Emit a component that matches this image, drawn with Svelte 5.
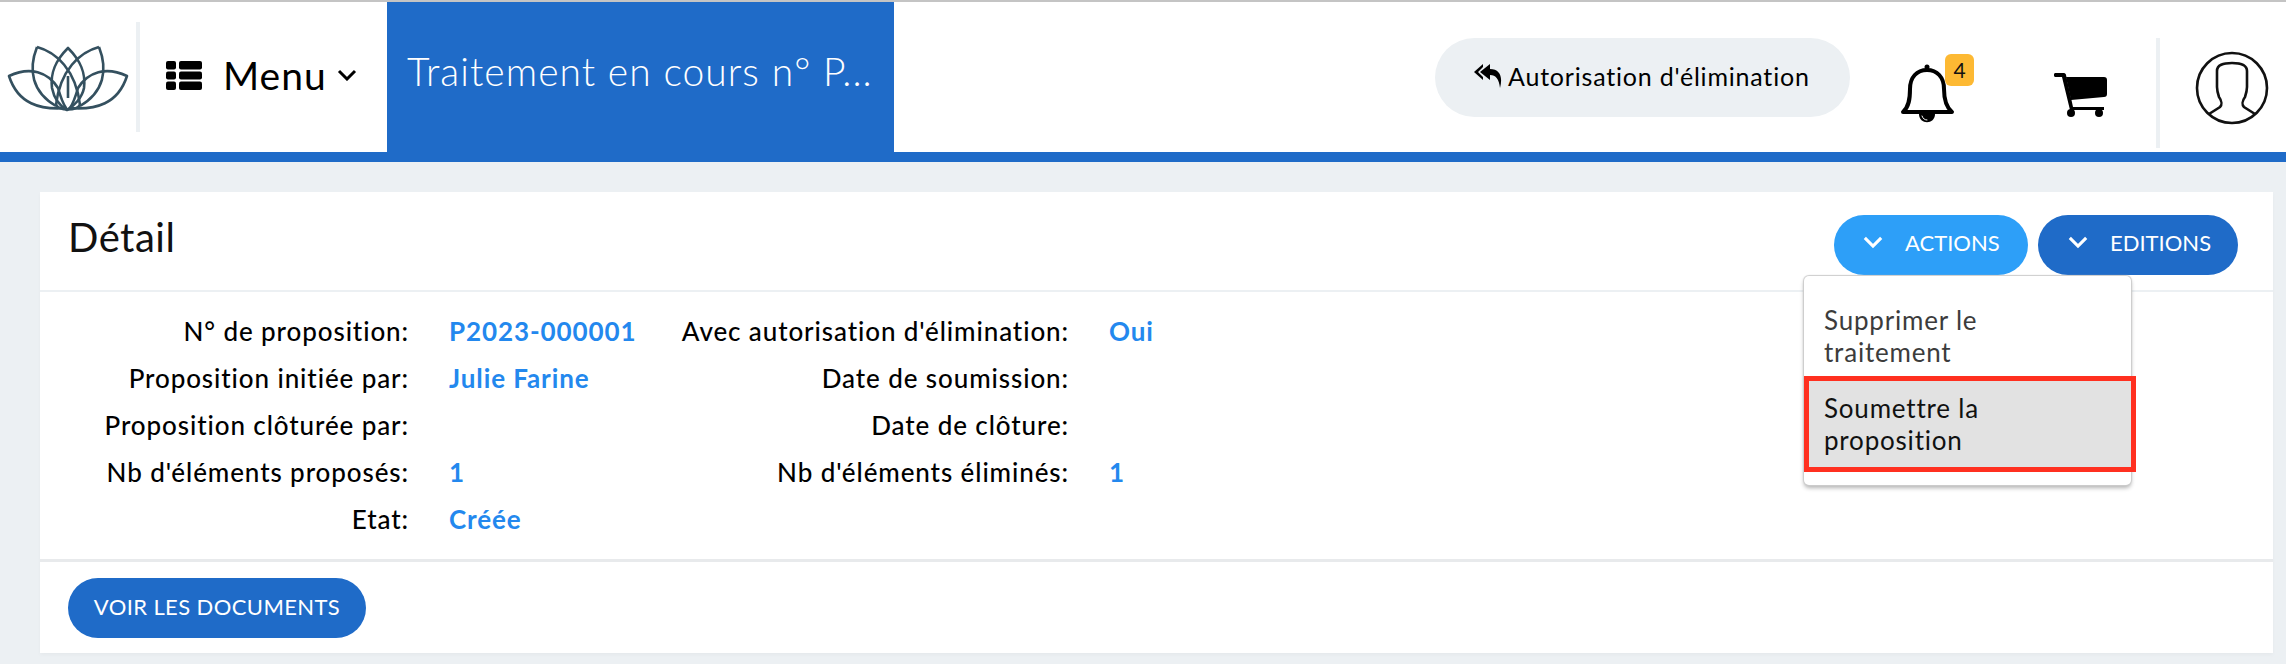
<script>
  let rowsLeft = [
    ["N° de proposition:", "P2023-000001"],
    ["Proposition initiée par:", "Julie Farine"],
    ["Proposition clôturée par:", ""],
    ["Nb d'éléments proposés:", "1"],
    ["Etat:", "Créée"]
  ];
  let rowsRight = [
    ["Avec autorisation d'élimination:", "Oui"],
    ["Date de soumission:", ""],
    ["Date de clôture:", ""],
    ["Nb d'éléments éliminés:", "1"]
  ];
</script>

<div class="page">
  <header class="topbar">
    <div class="logo">
      <svg width="136" height="130" viewBox="0 2 136 130" fill="none" stroke="#34505f" stroke-width="2.6" stroke-linejoin="round">
        <path d="M9 76 C30 66 48 72 58 88 C60 95 62 102 66 108 C40 110 18 104 9 76 Z" />
        <path d="M127 76 C106 66 88 72 78 88 C76 95 74 102 70 108 C96 110 118 104 127 76 Z" />
        <path d="M37 47 C28 70 32 92 56 106 M37 47 C56 52 76 70 80 105" />
        <path d="M99 47 C108 70 104 92 80 106 M99 47 C80 52 60 70 56 105" />
        <path d="M68 48 C56 60 50 72 52 88 C54 98 60 106 67 110 C74 106 82 98 84 88 C86 72 80 60 68 48 Z" />
        <path d="M68 76 L68 98 M56 105 C60 111 76 111 80 105" />
      </svg>
    </div>
    <div class="sep"></div>
    <button class="menu">
      <svg width="36" height="29" viewBox="0 0 36 29" fill="#000">
        <rect x="0" y="0" width="10" height="8.5" rx="2" /><rect x="13" y="0" width="23" height="8.5" rx="2" />
        <rect x="0" y="10.5" width="10" height="8" rx="2" /><rect x="13" y="10.5" width="23" height="8" rx="2" />
        <rect x="0" y="20.5" width="10" height="8.5" rx="2" /><rect x="13" y="20.5" width="23" height="8.5" rx="2" />
      </svg>
      <span>Menu</span>
      <svg class="caret" width="20" height="12" viewBox="0 0 20 12" fill="none" stroke="#000" stroke-width="3"><path d="M2 2 L10 10 L18 2" /></svg>
    </button>
    <div class="tab">Traitement en cours n° P...</div>

    <div class="right">
      <button class="pill">
        <svg width="28" height="26" viewBox="0 0 28 26" fill="#000">
          <path d="M9 1 L0 9 L9 17 L9 14 L4 9 L9 4 Z" />
          <path d="M16 1 L6 9 L16 17 L16 12 C22 12 25 16 26 25 C29 14 26 6 16 6 Z" />
        </svg>
        <span>Autorisation d'élimination</span>
      </button>
      <div class="bell">
        <svg width="56" height="60" viewBox="0 0 56 60" fill="none" stroke="#000" stroke-width="4" stroke-linecap="round">
          <path d="M3 49 C9 44 10 36 10 26 C10 14 17 7 27 7 C37 7 44 14 44 26 C44 36 46 44 52 49 Z" stroke-linejoin="round" />
          <circle cx="27" cy="4" r="2.5" fill="#000" stroke="none" />
          <path d="M19 51 C19 62 35 62 35 51 Z" fill="#000" stroke="none" />
          <path d="M22 53 C23 56 25 57 27 57" stroke="#fff" stroke-width="1" />
        </svg>
        <span class="badge">4</span>
      </div>
      <div class="cart">
        <svg width="54" height="46" viewBox="0 0 54 46" fill="#000">
          <path d="M2 1 H10 C11 1 12 2 12 3 L19 35 H50 V38 H16 L8 5 H2 C-1 5 -1 1 2 1 Z" />
          <path d="M12 5 H50 C52 5 53 6 53 8 V22 C53 24 52 25 50 25 L17 28 Z" />
          <circle cx="17" cy="41" r="4" /><circle cx="45" cy="41" r="4" />
        </svg>
      </div>
      <div class="sep user-sep"></div>
      <div class="avatar">
        <svg width="74" height="74" viewBox="0 0 74 74" fill="none" stroke="#111" stroke-width="2.6">
          <circle cx="37" cy="37" r="35" />
          <path d="M14 63 L25 56 C27 54 27 50 24 46 C23 43 22 40 22 36 L22 20 C22 14 28 12 37 12 C46 12 52 14 52 20 L52 36 C52 40 51 43 50 46 C47 50 47 54 49 56 L60 63" />
        </svg>
      </div>
    </div>
  </header>

  <main class="card">
    <div class="card-head">
      <h2>Détail</h2>
      <div class="actions">
        <div class="dd">
          <button class="btn light"><svg class="chev" width="20" height="13" viewBox="0 0 22 14" fill="none" stroke="#fff" stroke-width="3.4"><path d="M2 2 L11 11 L20 2" /></svg>ACTIONS</button>
          <div class="dd-menu">
            <div class="dd-item">Supprimer le traitement</div>
            <div class="dd-item current">Soumettre la proposition</div>
          </div>
        </div>
        <button class="btn dark edit"><svg class="chev" width="20" height="13" viewBox="0 0 22 14" fill="none" stroke="#fff" stroke-width="3.4"><path d="M2 2 L11 11 L20 2" /></svg>EDITIONS</button>
      </div>
    </div>

    <div class="details">
      <dl class="col first">
        {#each rowsLeft as r}
          <dt>{r[0]}</dt><dd>{r[1]}</dd>
        {/each}
      </dl>
      <dl class="col second">
        {#each rowsRight as r}
          <dt>{r[0]}</dt><dd>{r[1]}</dd>
        {/each}
      </dl>
    </div>

    <div class="card-foot">
      <button class="btn dark docs">VOIR LES DOCUMENTS</button>
    </div>
  </main>
</div>

<style>
  :global(body) {
    margin: 0;
    background: #ecf0f3;
    font-family: "Lato", "Open Sans", sans-serif;
  }

  button {
    font-family: inherit;
    border: none;
    cursor: pointer;
  }

  .page {
    height: 664px;
    overflow: hidden;
    border-top: 2px solid #c4c4c4;
    box-sizing: border-box;
  }

  .topbar {
    display: flex;
    align-items: center;
    height: 160px;
    box-sizing: border-box;
    background: #fff;
    border-bottom: 10px solid #1f6bc8;
  }

  .logo {
    width: 136px;
    height: 130px;
    align-self: flex-start;
  }

  .sep {
    width: 4px;
    height: 110px;
    background: #ecf0f3;
  }

  .menu {
    display: flex;
    align-items: center;
    width: 247px;
    padding: 0 0 4px 26px;
    box-sizing: border-box;
    background: none;
    font-size: 39px;
    color: #000;
  }

  .menu span {
    margin-left: 21px;
    letter-spacing: 1px;
  }

  .caret {
    margin-left: 10px;
  }

  .tab {
    align-self: stretch;
    display: flex;
    align-items: center;
    width: 507px;
    padding: 0 0 12px 20px;
    box-sizing: border-box;
    background: #1f6bc8;
    color: #fff;
    font-size: 39px;
    font-weight: 300;
    letter-spacing: 1.05px;
  }

  .right {
    display: flex;
    align-items: center;
    margin-left: auto;
    height: 100%;
  }

  .pill {
    display: flex;
    align-items: center;
    gap: 6px;
    width: 415px;
    height: 79px;
    padding: 0 0 4px 39px;
    box-sizing: border-box;
    border-radius: 40px;
    background: #ecf0f3;
    color: #000;
    font-size: 25px;
    letter-spacing: 0.8px;
    margin-top: 1px;
  }

  .bell {
    position: relative;
    margin-left: 50px;
    width: 56px;
    height: 60px;
    margin-top: 32px;
  }

  .badge {
    position: absolute;
    left: 45px;
    top: -9px;
    width: 29px;
    height: 32px;
    border-radius: 6px;
    background: #fdb933;
    font-size: 21px;
    line-height: 32px;
    text-align: center;
    color: #111;
  }

  .cart {
    margin-left: 98px;
    height: 46px;
    margin-top: 36px;
  }

  .user-sep {
    margin-left: 48px;
    margin-top: 32px;
  }

  .avatar {
    width: 74px;
    height: 74px;
    margin-left: 35px;
    margin-right: 17px;
    margin-top: 22px;
  }

  .card {
    margin: 30px 13px 0 40px;
    height: 461px;
    background: #fff;
    box-shadow: 0 2px 4px rgba(0, 0, 0, 0.03);
  }

  .card-head {
    display: flex;
    justify-content: space-between;
    height: 100px;
    box-sizing: border-box;
    border-bottom: 2px solid #ecf0f3;
    padding: 23px 35px 0 28px;
  }

  h2 {
    margin: 0;
    font-size: 40px;
    font-weight: 400;
    line-height: 44px;
    letter-spacing: 0.5px;
    color: #111;
  }

  .actions {
    display: flex;
    gap: 10px;
  }

  .dd {
    position: relative;
  }

  .btn {
    display: flex;
    align-items: center;
    height: 60px;
    box-sizing: border-box;
    border-radius: 30px;
    color: #fff;
    font-size: 22px;
    padding: 0 0 5px 29px;
    white-space: nowrap;
  }

  .btn.light {
    background: #2d9ff8;
    width: 194px;
  }

  .btn.dark {
    background: #1f6bc8;
  }

  .btn.edit {
    width: 200px;
    padding-left: 30px;
  }

  .chev {
    flex-shrink: 0;
    margin-right: 22px;
  }

  .dd-menu {
    position: absolute;
    left: -30px;
    top: 61px;
    width: 327px;
    height: 209px;
    box-sizing: border-box;
    padding: 28px 0 0;
    background: #fff;
    border-radius: 5px;
    box-shadow: 0 0 1px 1px #ccc, 0 3px 4px rgba(0, 0, 0, 0.3);
    font-size: 26px;
    line-height: 32px;
    letter-spacing: 0.8px;
    color: #3c3c3c;
    z-index: 2;
  }

  .dd-item {
    padding: 0 90px 8px 20px;
  }

  .dd-item.current {
    width: 332px;
    box-sizing: border-box;
    padding: 11px 60px 11px 15px;
    border: 5px solid #ff3020;
    background: #e2e2e2;
    color: #111;
  }

  .details {
    display: flex;
    height: 270px;
    box-sizing: border-box;
    padding-top: 15px;
    border-bottom: 3px solid #e8eaec;
  }

  .col {
    display: grid;
    grid-auto-rows: 47px;
    align-items: center;
    margin: 0;
    font-size: 26px;
    font-weight: 500;
    letter-spacing: 0.9px;
    align-content: start;
  }

  .col.first {
    grid-template-columns: 369px 260px;
  }

  .col.second {
    grid-template-columns: 400px 200px;
  }

  dt {
    text-align: right;
    color: #000;
    white-space: nowrap;
  }

  dd {
    margin: 0 0 0 40px;
    color: #2388ee;
    font-weight: 700;
  }

  .card-foot {
    padding: 16px 28px;
  }

  .docs {
    width: 298px;
    padding: 0 0 3px;
    justify-content: center;
    font-size: 22px;
    letter-spacing: 0.4px;
  }
</style>
